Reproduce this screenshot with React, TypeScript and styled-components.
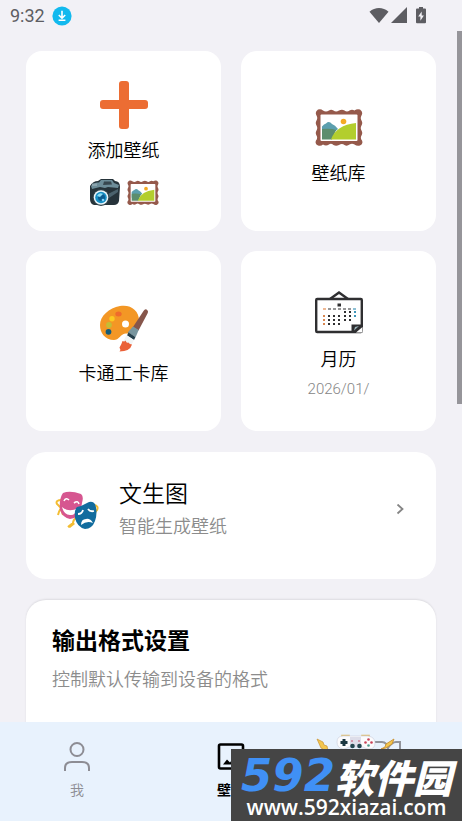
import React from "react";
import styled, { createGlobalStyle, css } from "styled-components";

const GlobalStyle = createGlobalStyle`
  *, *::before, *::after { box-sizing: border-box; }
  html, body, #root { height: 100%; }
  body {
    margin: 0;
    background: #f2f1f6;
    color: #000;
    font-family: Roboto, "Noto Sans CJK SC", sans-serif;
    overflow: hidden;
  }
  button { font: inherit; color: inherit; border: 0; padding: 0; cursor: pointer; }
  svg { display: block; flex: none; }
  h2, p { margin: 0; }
`;

const Screen = styled.div`
  position: relative;
  display: flex;
  flex-direction: column;
  height: 100vh;
  overflow: hidden;
`;

const StatusBar = styled.header`
  display: flex;
  align-items: center;
  justify-content: space-between;
  flex: none;
  height: 31px;
  padding: 0 36px 0 10px;
  color: #5d5d62;
`;

const StatusGroup = styled.div<{ $gap: number }>`
  display: flex;
  align-items: center;
  gap: ${(p) => p.$gap}px;
`;

const Clock = styled.time`
  font-size: 18px;
  line-height: 24px;
`;

const Content = styled.main`
  position: relative;
  flex: 1;
  min-height: 0;
  overflow: hidden;
  display: flex;
  flex-direction: column;
  gap: 21px;
  padding: 20px 26px 0;
`;

const ScrollThumb = styled.div`
  position: absolute;
  top: 0;
  right: 0;
  width: 5px;
  height: 54%;
  background: #96959a;
`;

const TileGrid = styled.div`
  display: grid;
  grid-template-columns: 1fr 1fr;
  grid-auto-rows: 180px;
  gap: 20px;
  flex: none;
`;

const cardSurface = css`
  background: #fff;
  border-radius: 20px;
`;

const Tile = styled.button`
  ${cardSurface}
  border-radius: 16px;
  display: flex;
  flex-direction: column;
  align-items: center;
  justify-content: center;
  gap: 10px;
  && { padding-top: 8px; }
`;

const TileLabel = styled.span`
  font-size: 18px;
  line-height: 24px;
  font-weight: 350;
`;

const TileDate = styled.span`
  padding-bottom: 4px;
  font-size: 15px;
  line-height: 14px;
  font-weight: 300;
  color: #858585;
`;

const SmallIcons = styled.span`
  display: flex;
  gap: 6px;
  padding-top: 4px;
`;

const LinkCard = styled.button`
  ${cardSurface}
  display: flex;
  align-items: center;
  flex: none;
  gap: 20px;
  height: 127px;
  text-align: left;
  && { padding: 0 32px 12px 29px; }
`;

const CardText = styled.span`
  display: flex;
  flex-direction: column;
  flex: 1;
`;

const CardTitle = styled.span`
  font-size: 23px;
  line-height: 34px;
  font-weight: 350;
`;

const CardNote = styled.span`
  font-size: 18px;
  line-height: 30px;
  font-weight: 350;
  color: #8c8c8c;
`;

const SettingsCard = styled.section`
  ${cardSurface}
  flex: none;
  min-height: 200px;
  padding: 24px 26px;
  box-shadow: 0 -1px 2px rgba(0, 0, 0, 0.09);
`;

const SettingsTitle = styled.h2`
  font-size: 23px;
  line-height: 36px;
  font-weight: 700;
`;

const SettingsNote = styled.p`
  padding-top: 6px;
  font-size: 18px;
  line-height: 28px;
  font-weight: 350;
  color: #8c8c8c;
`;

const TabBar = styled.nav`
  display: grid;
  grid-template-columns: repeat(3, 1fr);
  flex: none;
  height: 99px;
  background: #e8f2fd;
`;

const Tab = styled.button<{ $active?: boolean }>`
  display: flex;
  flex-direction: column;
  align-items: center;
  gap: 6px;
  background: transparent;
  color: ${(p) => (p.$active ? "#000" : "#8d8d94")};
  font-size: 14px;
  line-height: 20px;
  && {
    padding-top: 18px;
    font-weight: ${(p) => (p.$active ? 700 : 350)};
  }
`;

const GameTab = styled(Tab)`
  align-items: flex-start;
  && { padding: 12px 0 0 8px; }
`;

const Watermark = styled.aside`
  position: absolute;
  right: 0;
  bottom: 0;
  width: 50%;
  height: 72px;
  padding-top: 6px;
  background: #454545;
  color: #fff;
  display: flex;
  flex-direction: column;
  align-items: center;
  white-space: nowrap;
`;

const Brand = styled.div`
  display: flex;
  align-items: center;
  font-size: 39px;
  line-height: 42px;
  font-weight: 900;
  font-style: italic;
  font-family: "Noto Sans CJK SC", sans-serif;
`;

const BrandNumber = styled.span`
  color: #4090f5;
  font-family: "DejaVu Sans", sans-serif;
  font-size: 45px;
  font-weight: 700;
`;

const Site = styled.div`
  font-family: "Open Sans", sans-serif;
  font-size: 21px;
  line-height: 20px;
  font-weight: 600;
`;

const DownloadIcon = () => (
  <svg width="20" height="20" viewBox="0 0 20 20" aria-hidden="true">
    <circle cx="10" cy="10" r="9.6" fill="#12b9ee" />
    <path d="M10 4.8v7M6.8 9l3.2 3.2L13.2 9M6.6 14.3h6.8" fill="none" stroke="#fff" strokeWidth="1.6" />
  </svg>
);

const WifiIcon = () => (
  <svg width="20" height="18" viewBox="0 0 20 18" aria-hidden="true">
    <path d="M.5 4.700C6-.3 14-.3 19.500 4.700L10 16Z" fill="currentColor" />
  </svg>
);

const SignalIcon = () => (
  <svg width="16" height="18" viewBox="0 0 16 18" aria-hidden="true">
    <path d="M16 0v16H0Z" fill="currentColor" />
  </svg>
);

const BatteryIcon = () => (
  <svg width="10" height="18" viewBox="0 0 10 18" aria-hidden="true">
    <path d="M3 0h4v1.600h2q1 0 1 1v12.600q0 1-1 1H1q-1 0-1-1V2.600q0-1 1-1h2Z" fill="currentColor" />
    <path d="M5.700 4.400 2.200 9.600h2.200v4.200l3.500-5.300H5.700Z" fill="#f2f1f6" />
  </svg>
);

const PlusIcon = () => (
  <svg width="48" height="48" viewBox="0 0 48 48" aria-hidden="true">
    <rect x="19" y="0" width="10" height="48" rx="3" fill="#ec6d33" />
    <rect x="0" y="19" width="48" height="9" rx="3" fill="#ec6d33" />
  </svg>
);

const FrameIcon = ({ size }: { size: number }) => (
  <svg width={size} height={size} viewBox="0 0 48 48" aria-hidden="true">
    <path
      d="M3 5.500Q6 4.500 8 6.500Q11 8.500 14 6.500Q16 5 18.500 6.500Q21 8.500 24 6.500Q27 5 29.500 6.500Q32 8.500 34.500 6.500Q37 5 39.500 6.500Q42 4.500 45 5.500Q48.500 8 46.500 11.500Q45 14 46.500 16.500Q48 19 46.500 21.500Q45 24 46.500 26.500Q48 29 46.500 31.500Q45 34 47 36.500Q48.500 40 45 41.500Q42 42.500 39.500 40.500Q37 39 34.500 40.500Q32 42.500 29.500 41Q27 39 24 41Q21 42.500 18.500 41Q16 39 14 40.500Q11 42.500 8 40.500Q6 42.500 3 41.500Q-.5 40 1 36.500Q3 34 1.500 31.500Q0 29 1.500 26.500Q3 24 1.500 21.500Q0 19 1.500 16.500Q3 14 1.500 11.500Q-.5 8 3 5.500Z"
      fill="#95594b"
    />
    <rect x="5.500" y="10.500" width="37" height="26.500" rx="1" fill="#fff" />
    <path d="M7 22.500q2-2.500 4-3 3-3 6 .5 3 1 6 5L16 31H7Z" fill="#5c9fae" />
    <path d="M7 25q9-1 14 1l-4 9.500H7Z" fill="#5c8d6d" />
    <path d="M16 35.500Q21 21 41 19v16.500Z" fill="#b3ce2d" />
    <circle cx="28.500" cy="17.500" r="2.800" fill="#f4ab25" />
  </svg>
);

const CameraIcon = () => (
  <svg width="32" height="32" viewBox="0 0 32 32" aria-hidden="true">
    <path d="M1 9Q4 4 9 4l3-2h12l2 2q5 0 5 6l-1 14q-1 4-5 4H5q-4-1-4-6V11Z" fill="#26333a" />
    <path d="M2 9q3-4 8-3.500l2-2.500h11l2 3 5 2-1 3-10-1-3 1-5-1-8 2Z" fill="#6d8d99" />
    <path d="M15 4.500h7l1 3-9 .5Z" fill="#37474f" />
    <path d="M3 6.500h5V9H3Z" fill="#8ba5af" />
    <path d="M19 17l10-5v3l-9 6Z" fill="#4b626d" />
    <circle cx="12" cy="20.500" r="8.500" fill="#304047" />
    <circle cx="12" cy="20.500" r="7.300" fill="#e9f5fa" />
    <circle cx="12" cy="20.500" r="5.800" fill="#168fc5" />
    <circle cx="12.500" cy="20.500" r="3.500" fill="#0b5d91" />
    <path d="M8 19q2-4 6-2l-3 3Z" fill="#8bdcf4" />
    <circle cx="14" cy="23" r="1.300" fill="#81d4fa" />
  </svg>
);

const PaletteIcon = () => (
  <svg width="48" height="48" viewBox="0 0 48 48" aria-hidden="true">
    <path
      fillRule="evenodd"
      d="M20 2C31 0 39 7 39 16c0 5-2 11-6 13-4 1-8-.5-11 2-3 2-4 5-8 5C5 36 0 29 0 21 0 12 9 4 20 2ZM25.500 16.500a3.500 3.500 0 1 0 0 7 3.500 3.500 0 0 0 0-7Z"
      fill="#f39725"
    />
    <ellipse cx="18.500" cy="10" rx="3.200" ry="2.500" fill="#ef6b2c" />
    <circle cx="12" cy="14.700" r="2.700" fill="#fbca20" />
    <circle cx="9" cy="21" r="2.900" fill="#c4bd35" />
    <circle cx="8.500" cy="27.800" r="2.900" fill="#155c79" />
    <path d="M43.500 7q2-3 4-.5 1 1 0 3L38.500 26.500 33 23Z" fill="#86564b" />
    <path d="m33 22.500 5.700 3.500-3 7-8-4.500Z" fill="#78959e" />
    <path d="m28.500 28.500 7 4.500-1.500 3-7-4.500Z" fill="#243f4b" />
    <path d="m26.500 31 7.500 5-3 6-8-4Z" fill="#f1f5f6" />
    <path d="M22.500 37q2 1 3-.5 1 3 3 2 1 2 3.500 2-2 7-12.500 7 1.500-2 0-4 2-3 3-6.500Z" fill="#ea6138" />
  </svg>
);

const hangingDays = [
  { y: 21, xs: [30, 35, 40] },
  { y: 25, xs: [9, 14, 19, 24, 30, 35, 40] },
  { y: 29, xs: [9, 14, 19, 24, 30, 35] },
  { y: 33, xs: [9, 14, 19, 24] },
];

const CalendarIcon = () => (
  <svg width="48" height="48" viewBox="0 0 48 48" aria-hidden="true">
    <path d="m15 9 9-6.500L33 9" fill="none" stroke="#2f2f31" strokeWidth="2.400" />
    <rect x="1.200" y="9" width="45.600" height="33" rx="1" fill="#fff" stroke="#2f2f31" strokeWidth="2.400" />
    <path d="M22.500 13.500h3.500v3h-3.500z" fill="#2f2f31" />
    <path d="M8 19h3" stroke="#e2894c" strokeWidth="1.200" />
    <path d="M13 19h25" stroke="#2f2f31" strokeWidth="1.200" strokeDasharray="3 2" />
    <path d="M38 19h3" stroke="#3e94b8" strokeWidth="1.200" />
    {hangingDays.map((row) =>
      row.xs.map((x) => (
        <rect
          key={`${x}-${row.y}`}
          x={x - 1}
          y={row.y}
          width="2"
          height="2"
          fill={x === 9 ? "#d88650" : x === 40 ? "#3e94b8" : "#2f2f31"}
        />
      )),
    )}
    <path d="M36.500 42v-7.500H47V42Z" fill="#2f2f31" />
    <path d="m39 40.500 1-3.500 4-1Z" fill="#9bb4bb" />
    <path d="m41 42.500 6.500-5.500v5.500Z" fill="#fff" />
    <path d="m40 42 7-6.500" stroke="#2f2f31" strokeWidth="1.500" />
  </svg>
);

const MasksIcon = () => (
  <svg width="44" height="44" viewBox="0 0 44 44" aria-hidden="true">
    <g fill="none" stroke="#f3bd32" strokeWidth="2">
      <path d="M7 12Q0 12 2 16q2 2 4 4Q4 23 3 27M6 21l2 6" />
      <path d="M39 17q5 1 3 5-2 3-3 3 1 3 0 5M21 30q-3 2-3 5-3 2-5 4" />
    </g>
    <path d="m13 39 5-5 2 2-5 4Z" fill="#f3bd32" />
    <path d="M8 5Q15 2 26 6q3 2 1 9-2 16-12 16Q8 30 5 22 4 10 8 5Z" fill="#d65690" />
    <path d="M9 13q2-4 5-1M19 15q4-3 5 1" fill="none" stroke="#fff" strokeWidth="1.600" />
    <path d="M7 19q7 6 16 1-3 8-8 7-6 0-8-8Z" fill="#fff" />
    <path d="M22 19Q27 18 32 15q5-3 8 1 3 8 0 17-3 8-10 8-8-2-10-11-1-8 2-11Z" fill="#126c9e" />
    <path d="M23 26q4 0 5-4M33 21q2 3 6 2" fill="none" stroke="#fff" strokeWidth="1.800" />
    <path d="M26 37q0-6 5-6 4-1 7 4-6-3-12 2Z" fill="#fff" />
  </svg>
);

const ChevronIcon = () => (
  <svg width="8" height="12" viewBox="0 0 8 12" aria-hidden="true">
    <path d="m1.500 .5 5 4.500-5 4.500" fill="none" stroke="#858585" strokeWidth="1.800" />
  </svg>
);

const PersonIcon = () => (
  <svg width="28" height="34" viewBox="0 0 28 34" aria-hidden="true">
    <g fill="none" stroke="currentColor" strokeWidth="2">
      <circle cx="14" cy="9.500" r="6.500" />
      <path d="M2 31v-3q0-6 7-6h10q7 0 7 6v3" />
    </g>
  </svg>
);

const PictureIcon = () => (
  <svg width="28" height="34" viewBox="0 0 28 34" aria-hidden="true">
    <rect x="2" y="4.500" width="24" height="24" rx="1.500" fill="none" stroke="currentColor" strokeWidth="2.600" />
    <path d="m6 24.500 4-5 3 3 5-7 5 9Z" fill="currentColor" />
  </svg>
);

const GameIcon = () => (
  <svg width="88" height="40" viewBox="0 0 88 40" aria-hidden="true">
    <path d="M59 8h7q5 0 6 7v10M72 14q4-6 8-6h4v31H60" fill="none" stroke="#92949b" strokeWidth="2" />
    <path d="m1 5 6 3 1 3 3 1 2 9-6-6-2-1Z" fill="#f3c64e" stroke="#c99131" strokeWidth=".7" />
    <path d="m78 5-8 5-1 3-4 2 5-1 6-4Z" fill="#f3c64e" stroke="#c99131" strokeWidth=".9" />
    <path d="M26 3V1.500h7V3M46 3V1.500h7V3" fill="none" stroke="#e0bd6e" strokeWidth="1.600" />
    <path d="M27 2h25q7 1 7 7t-6 6q-3 0-6-2H33q-3 2-6 2-6-1-6-7t6-6Z" fill="#fbfbfd" stroke="#cfd2df" strokeWidth=".7" />
    <path d="M34 3h11v10H34Z" fill="#dddde9" />
    <path d="M28 5v7M24.500 8.500h7" stroke="#1c3842" strokeWidth="3" />
    <g fill="#ca4257">
      <circle cx="52.500" cy="5.500" r="1.300" />
      <circle cx="49.500" cy="8.500" r="1.300" />
      <circle cx="55.500" cy="8.500" r="1.300" />
    </g>
    <circle cx="52.500" cy="11.500" r="1.300" fill="#4f9e91" />
    <path d="M35 7h2M42 7h2" stroke="#c65270" strokeWidth="1" />
    <circle cx="36.500" cy="12" r="2.300" fill="#244751" />
    <circle cx="43.500" cy="12" r="2.300" fill="#244751" />
  </svg>
);

export default function App() {
  return (
    <Screen>
      <GlobalStyle />
      <StatusBar>
        <StatusGroup $gap={7}>
          <Clock>9:32</Clock>
          <DownloadIcon />
        </StatusGroup>
        <StatusGroup $gap={9}>
          <StatusGroup $gap={2}>
            <WifiIcon />
            <SignalIcon />
          </StatusGroup>
          <BatteryIcon />
        </StatusGroup>
      </StatusBar>

      <Content>
        <TileGrid>
          <Tile type="button">
            <PlusIcon />
            <TileLabel>添加壁纸</TileLabel>
            <SmallIcons>
              <CameraIcon />
              <FrameIcon size={32} />
            </SmallIcons>
          </Tile>
          <Tile type="button">
            <FrameIcon size={48} />
            <TileLabel>壁纸库</TileLabel>
          </Tile>
          <Tile type="button">
            <PaletteIcon />
            <TileLabel>卡通工卡库</TileLabel>
          </Tile>
          <Tile type="button">
            <CalendarIcon />
            <TileLabel>月历</TileLabel>
            <TileDate>2026/01/</TileDate>
          </Tile>
        </TileGrid>

        <LinkCard type="button">
          <MasksIcon />
          <CardText>
            <CardTitle>文生图</CardTitle>
            <CardNote>智能生成壁纸</CardNote>
          </CardText>
          <ChevronIcon />
        </LinkCard>

        <SettingsCard>
          <SettingsTitle>输出格式设置</SettingsTitle>
          <SettingsNote>控制默认传输到设备的格式</SettingsNote>
        </SettingsCard>
        <ScrollThumb />
      </Content>

      <TabBar>
        <Tab type="button">
          <PersonIcon />
          我
        </Tab>
        <Tab type="button" $active aria-current="page">
          <PictureIcon />
          壁纸
        </Tab>
        <GameTab type="button" aria-label="游戏">
          <GameIcon />
        </GameTab>
      </TabBar>

      <Watermark>
        <Brand>
          <BrandNumber>592</BrandNumber>
          软件园
        </Brand>
        <Site>www.592xiazai.com</Site>
      </Watermark>
    </Screen>
  );
}
